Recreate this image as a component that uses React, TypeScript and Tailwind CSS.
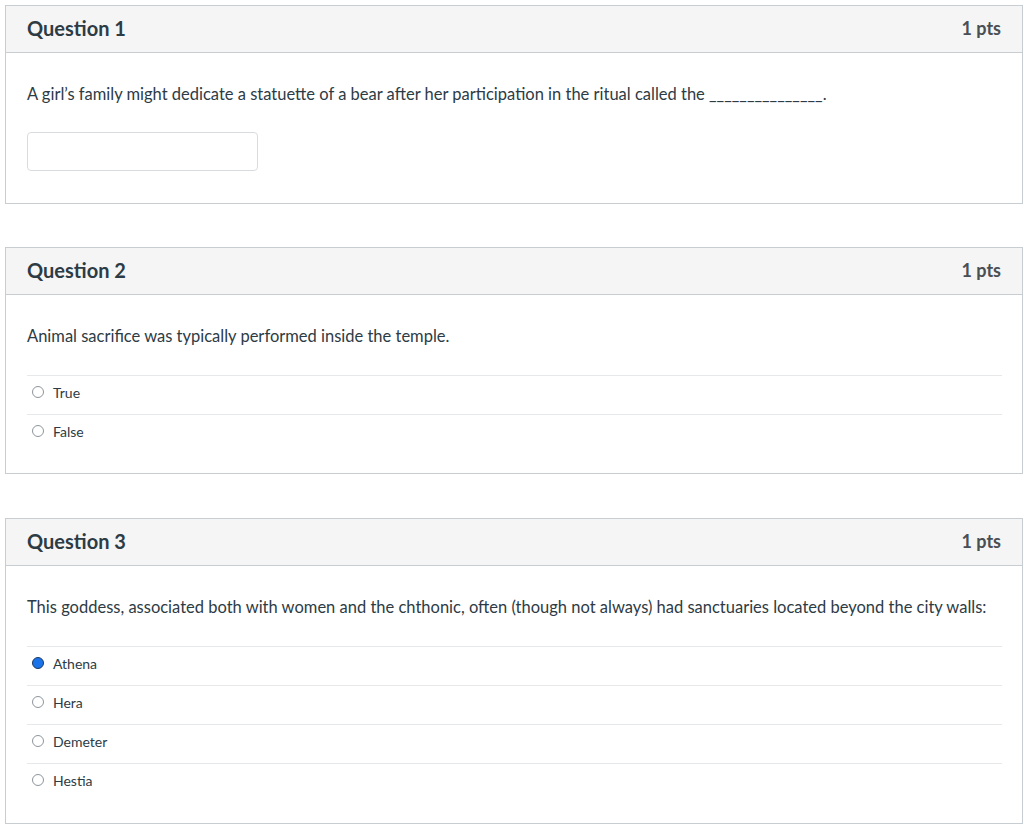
const font = { fontFamily: 'Lato, "Liberation Sans", sans-serif' };

type Answer = { label: string; selected?: boolean };

function Header({ title }: { title: string }) {
  return (
    <div className="flex h-[47px] items-center justify-between border-b border-[#c7cdd1] bg-[#f5f5f5] pb-[3px] pl-[21px] pr-[21px]">
      <h2 className="text-[20px] font-bold text-[#2d3b45]">{title}</h2>
      <span className="pt-[1px] text-[18px] font-bold text-[#4a4f53]">1 pts</span>
    </div>
  );
}

function Radio({ selected }: { selected?: boolean }) {
  if (selected) {
    return <span className="h-[12px] w-[12px] rounded-full border-[1.5px] border-[#1b3a63] bg-[#1a73e8]" />;
  }
  return <span className="h-[12px] w-[12px] rounded-full border border-[#8d959c] bg-white" />;
}

function Answers({ answers }: { answers: Answer[] }) {
  return (
    <div className="mt-[27px] mr-[20px]">
      {answers.map((a) => (
        <div key={a.label} className="flex h-[39px] items-center gap-[9px] border-t border-[#e6e8ea] pb-[6px] pl-[5px]">
          <Radio selected={a.selected} />
          <span className="text-[14px] text-[#2d3b45]">{a.label}</span>
        </div>
      ))}
    </div>
  );
}

function Card({ title, children, pb }: { title: string; children: React.ReactNode; pb: string }) {
  return (
    <div className="ml-[5px] w-[1018px] border border-[#c7cdd1] bg-white">
      <Header title={title} />
      <div className={`pl-[21px] pt-[29px] ${pb}`}>{children}</div>
    </div>
  );
}

export default function App() {
  return (
    <div className="min-h-[830px] bg-white pt-[5px]" style={font}>
      <Card title="Question 1" pb="pb-[32px]">
        <p className="text-[16.5px] leading-[24px] text-[#2d3b45]">
          A girl’s family might dedicate a statuette of a bear after her participation in the ritual called the _______________.
        </p>
        <input
          type="text"
          className="mt-[26px] h-[39px] w-[231px] rounded-[4px] border border-[#d9dcdf] bg-white outline-none"
        />
      </Card>

      <div className="h-[43px]" />

      <Card title="Question 2" pb="pb-[20px]">
        <p className="text-[16.5px] leading-[24px] text-[#2d3b45]">
          Animal sacrifice was typically performed inside the temple.
        </p>
        <Answers answers={[{ label: 'True' }, { label: 'False' }]} />
      </Card>

      <div className="h-[44px]" />

      <Card title="Question 3" pb="pb-[21px]">
        <p className="text-[16.5px] leading-[24px] text-[#2d3b45]">
          This goddess, associated both with women and the chthonic, often (though not always) had sanctuaries located beyond the city walls:
        </p>
        <Answers
          answers={[
            { label: 'Athena', selected: true },
            { label: 'Hera' },
            { label: 'Demeter' },
            { label: 'Hestia' },
          ]}
        />
      </Card>
    </div>
  );
}
